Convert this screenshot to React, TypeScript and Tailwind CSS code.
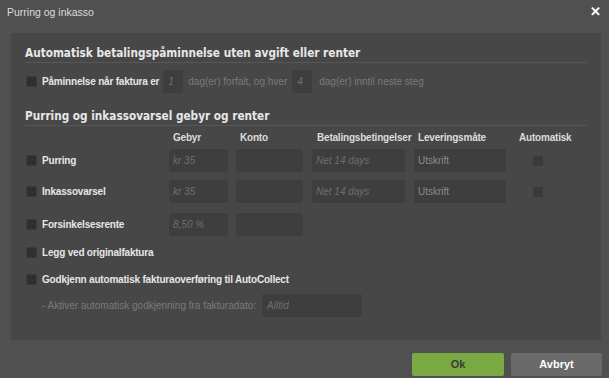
import React from "react";

const font = { fontFamily: '"Liberation Sans", Arial, sans-serif' };
const headFont = { fontFamily: '"DejaVu Sans Condensed", "DejaVu Sans", Verdana, sans-serif', fontSize: "11.7px" };

function Box() {
  return <div className="w-[11px] h-[11px] bg-[#2f2f2f] border border-[#3a3a3a] rounded-[1px] shrink-0" />;
}

function Input({ w, text, italic = true, light = false }: { w: string; text?: string; italic?: boolean; light?: boolean }) {
  return (
    <div className={`${w} h-[23px] bg-[#3e3e3e] rounded-[2px] flex items-center px-[4px] text-[10px] ${italic ? "italic" : ""} ${light ? "text-[#8a8a8a]" : "text-[#6e6e6e]"} shrink-0`}>
      {text}
    </div>
  );
}

function Row({ label, gebyr, betal, auto }: { label: string; gebyr: string; betal?: boolean; auto?: boolean }) {
  return (
    <div className="flex items-center h-[23px]">
      <div className="w-[144px] flex items-center gap-[5px] pl-[1px]">
        <Box />
        <span className="text-[10px] font-bold text-[#e6e6e6] tracking-[-0.2px]">{label}</span>
      </div>
      <Input w="w-[59px]" text={gebyr} />
      <div className="w-[8px]" />
      <Input w="w-[67px]" />
      {betal ? (
        <>
          <div className="w-[9px]" />
          <Input w="w-[93px]" text="Net 14 days" />
          <div className="w-[9px]" />
          <Input w="w-[92px]" text="Utskrift" italic={false} light />
          <div className="w-[64px] flex justify-center">
            {auto && <div className="w-[10px] h-[10px] bg-[#3a3a3a] rounded-[1px]" />}
          </div>
        </>
      ) : null}
    </div>
  );
}

export default function App() {
  return (
    <div className="w-[609px] h-[378px] bg-[#505050] flex flex-col overflow-hidden" style={font}>
      <div className="h-[33px] flex items-start justify-between pl-[7px] pr-[8px] pt-[3px]">
        <span className="text-[10.5px] text-[#dcdcdc] leading-[14px] mt-[2px]">Purring og inkasso</span>
        <span className="text-[13px] font-bold text-white leading-[18px]">✕</span>
      </div>
      <div className="ml-[11px] w-[590px] h-[307px] bg-[#474747] pl-[14px] pr-[14px] pt-[12px] flex flex-col">
        <div className="font-bold text-[#e8e8e8] border-b border-[#575757] pb-[1px] leading-[16px]" style={headFont}>
          Automatisk betalingspåminnelse uten avgift eller renter
        </div>
        <div className="flex items-center h-[23px] mt-[7px] text-[10px]">
          <div className="flex items-center gap-[5px] pl-[1px]">
            <Box />
            <span className="font-bold text-[#e6e6e6] tracking-[-0.2px]">Påminnelse når faktura er</span>
          </div>
          <div className="ml-[4px] w-[20px] h-[23px] bg-[#3e3e3e] rounded-[2px] flex items-center px-[5px] italic text-[#6e6e6e]">1</div>
          <span className="ml-[5px] text-[#7a7a7a]">dag(er) forfalt, og hver</span>
          <div className="ml-[5px] w-[20px] h-[23px] bg-[#3e3e3e] rounded-[2px] flex items-center px-[5px] italic text-[#6e6e6e]">4</div>
          <span className="ml-[7px] text-[#7a7a7a]">dag(er) inntil neste steg</span>
        </div>
        <div className="mt-[15px] font-bold text-[#e8e8e8] border-b border-[#575757] pb-[1px] leading-[16px]" style={headFont}>
          Purring og inkassovarsel gebyr og renter
        </div>
        <div className="flex items-center h-[18px] mt-[2px] text-[10px] font-bold text-[#dcdcdc] tracking-[-0.2px]">
          <div className="w-[148px]" />
          <div className="w-[67px]">Gebyr</div>
          <div className="w-[77px]">Konto</div>
          <div className="w-[101px]">Betalingsbetingelser</div>
          <div className="w-[101px]">Leveringsmåte</div>
          <div>Automatisk</div>
        </div>
        <div className="flex flex-col gap-[8px] mt-[3px]">
          <Row label="Purring" gebyr="kr 35" betal auto />
          <Row label="Inkassovarsel" gebyr="kr 35" betal auto />
          <div className="mt-[2px]">
            <Row label="Forsinkelsesrente" gebyr="8,50 %" />
          </div>
        </div>
        <div className="flex items-center gap-[5px] pl-[1px] mt-[9px] h-[14px]">
          <Box />
          <span className="text-[10px] font-bold text-[#e6e6e6] tracking-[-0.2px]">Legg ved originalfaktura</span>
        </div>
        <div className="flex items-center gap-[5px] pl-[1px] mt-[13px] h-[14px]">
          <Box />
          <span className="text-[10px] font-bold text-[#e6e6e6] tracking-[-0.2px]">Godkjenn automatisk fakturaoverføring til AutoCollect</span>
        </div>
        <div className="flex items-center mt-[8px] h-[23px] pl-[17px]">
          <span className="text-[10px] text-[#7a7a7a]">- Aktiver automatisk godkjenning fra fakturadato:</span>
          <div className="ml-[6px] w-[100px] h-[23px] bg-[#3e3e3e] rounded-[2px] flex items-center px-[5px] italic text-[10px] text-[#6e6e6e]">Alltid</div>
        </div>
      </div>
      <div className="flex justify-end gap-[7px] pr-[7px] mt-[13px]">
        <div className="w-[92px] h-[23px] bg-[#7aa843] rounded-[2px] flex items-center justify-center text-[11px] font-bold text-[#3a3a3a]">Ok</div>
        <div className="w-[91px] h-[23px] bg-[#6a6a6a] rounded-[2px] flex items-center justify-center text-[11px] font-bold text-white">Avbryt</div>
      </div>
    </div>
  );
}
